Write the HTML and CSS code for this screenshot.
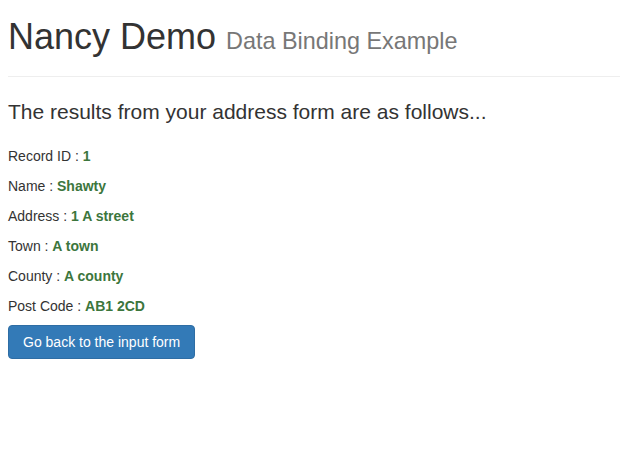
FILE: index.html
```html
<!DOCTYPE html>
<html>
<head>
<meta charset="utf-8">
<title>Nancy Demo</title>
<link rel="stylesheet" href="styles.css">
</head>
<body>
<div class="container">
  <div class="page-header">
    <h1>Nancy Demo <small>Data Binding Example</small></h1>
  </div>
  <p class="lead">The results from your address form are as follows...</p>
  <p>Record ID : <strong class="val">1</strong></p>
  <p>Name : <strong class="val">Shawty</strong></p>
  <p>Address : <strong class="val">1 A street</strong></p>
  <p>Town : <strong class="val">A town</strong></p>
  <p>County : <strong class="val">A county</strong></p>
  <p>Post Code : <strong class="val">AB1 2CD</strong></p>
  <a class="btn" href="#">Go back to the input form</a>
</div>
</body>
</html>
```
FILE: styles.css
```css
html, body {
  margin: 0;
  padding: 0;
  background: #fff;
}
body {
  font-family: "Liberation Sans", Arial, sans-serif;
  font-size: 14px;
  line-height: 20px;
  color: #333;
}
.container {
  padding: 0 0 0 8px;
}
.page-header {
  margin: 0 0 20px;
  padding-bottom: 9px;
  border-bottom: 1px solid #eee;
}
h1 {
  margin: 17px 0 10px;
  font-size: 36px;
  font-weight: 500;
  line-height: 1.1;
}
h1 small {
  font-size: 65%;
  color: #777;
  font-weight: 400;
}
p {
  margin: 0 0 10px;
}
p.lead {
  margin: 0 0 20px;
  font-size: 21px;
  font-weight: 400;
  line-height: 1.4;
}
.val {
  color: #3c763d;
  font-weight: 700;
}
.btn {
  display: inline-block;
  margin-top: -1px;
  padding: 6px 14px;
  font-size: 14px;
  line-height: 20px;
  color: #fff;
  background: #337ab7;
  border: 1px solid #2e6da4;
  border-radius: 4px;
  text-decoration: none;
}
```
